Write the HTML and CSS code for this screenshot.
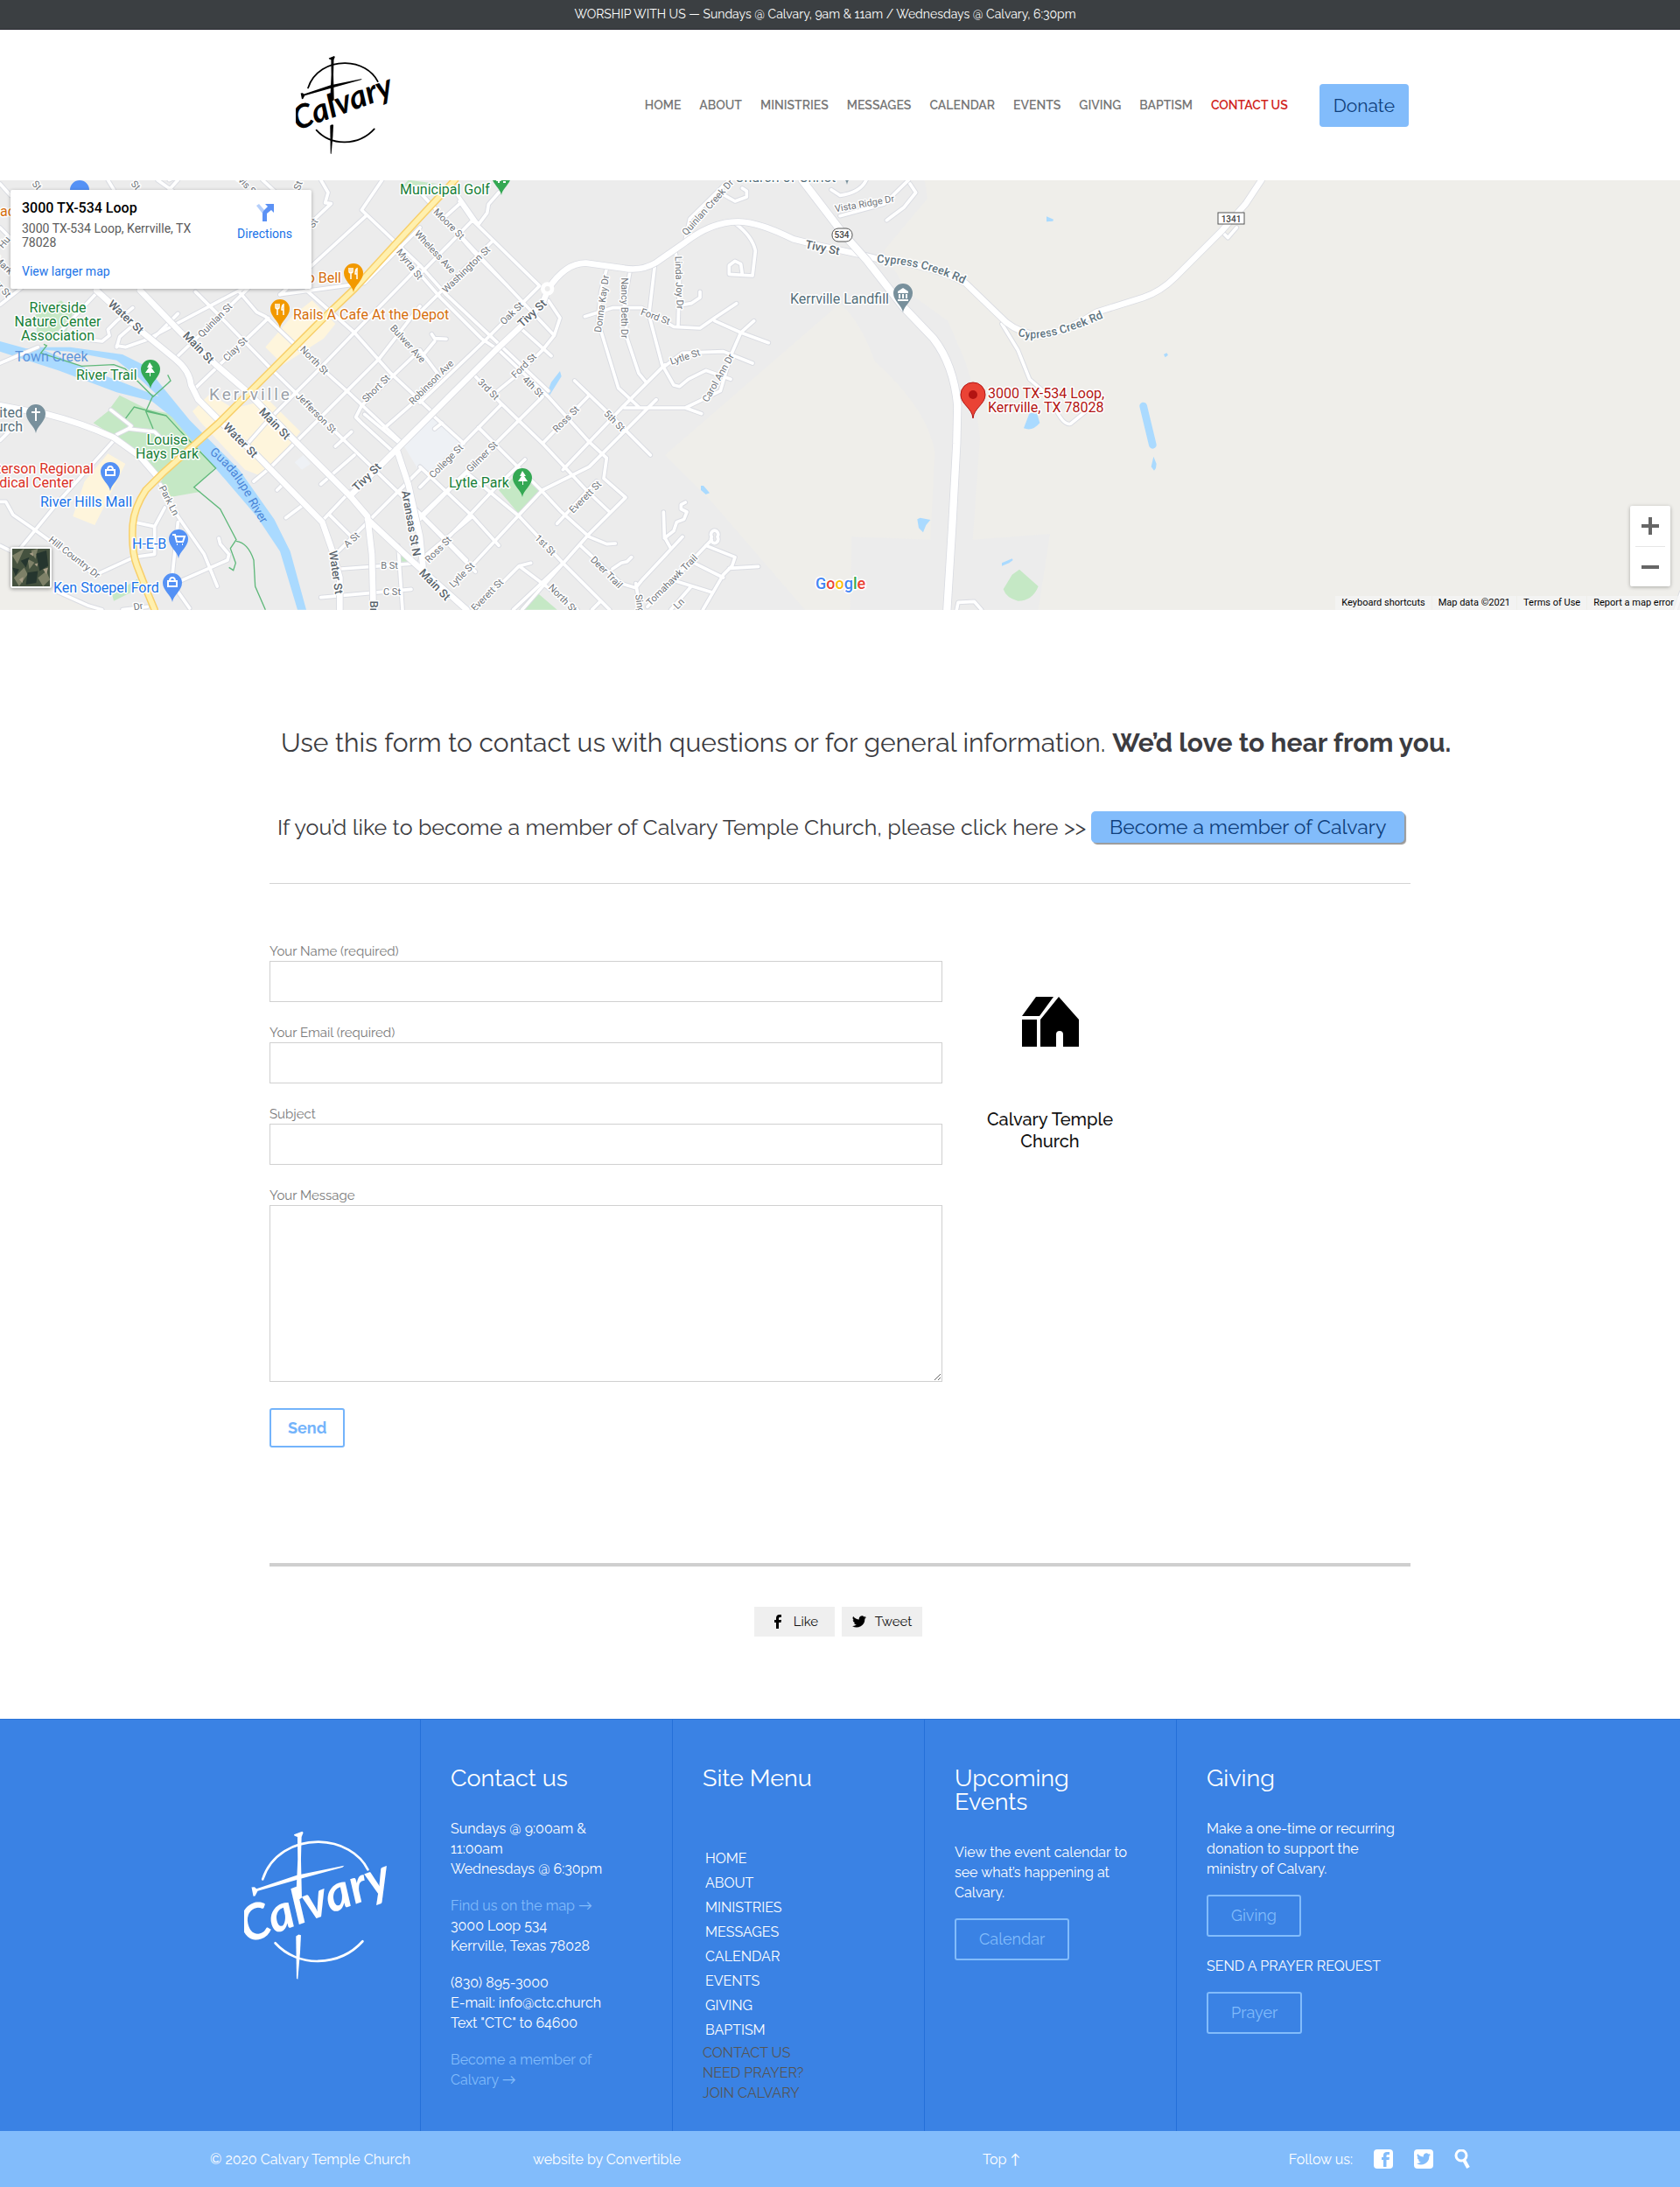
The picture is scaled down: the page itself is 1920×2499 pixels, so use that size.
FILE: index.html
```html
<!DOCTYPE html>
<html lang="en">
<head>
<meta charset="utf-8">
<meta name="viewport" content="width=device-width, initial-scale=1">
<title>Contact Us - Calvary Temple Church</title>
<link rel="stylesheet" href="styles.css">
</head>
<body>
<svg class="defs" aria-hidden="true">
  <symbol id="logo" viewBox="20 30 505 515">
    <g fill="currentColor">
      <path d="M190 46 218 35 222 39 216 54 214 130 217 262 202 272 197 262 203 130 202 54 192 50Z"/>
      <path d="M45 226 55 225 62 231 200 185 362 152 356 158 210 198 66 239 57 256 51 257Z"/>
      <path d="M197 394 206 388 214 390 211 450 203 541 199 538Z"/>
    </g>
    <g fill="none" stroke="currentColor" stroke-linecap="round" stroke-width="8">
      <path d="M83 199C110 115 190 70 275 71 350 72 415 110 443 166"/>
      <path d="M126 417C165 460 220 480 273 479 340 477 390 450 425 411"/>
    </g>
    <text class="logo-word" x="26" y="420" transform="rotate(-20 26 420)">Calvary</text>
  </symbol>
  <symbol id="pin" viewBox="-12 -12 24 36">
    <path d="M0 22C-1 14-11 9-11 0A11 11 0 0 1 11 0C11 9 1 14 0 22Z"/>
  </symbol>
  <symbol id="fb" viewBox="-4 0 16 16"><path d="M2 16V9H0V6h2V4C2 1.500 3.500 0 5.500 0H8v3H6.500C5.500 3 5 3.500 5 4.500V6h3L7.500 9H5v7Z"/></symbol>
  <symbol id="bird" viewBox="0 0 24 20"><path d="M24 2.400a10 10 0 0 1-2.800.8A5 5 0 0 0 23.300.5a10 10 0 0 1-3.100 1.200 4.900 4.900 0 0 0-8.400 4.500A14 14 0 0 1 1.700 1a4.900 4.900 0 0 0 1.500 6.600 4.900 4.900 0 0 1-2.200-.6 4.900 4.900 0 0 0 3.900 4.900 5 5 0 0 1-2.200.1 4.900 4.900 0 0 0 4.600 3.400A9.900 9.900 0 0 1 0 17.400 14 14 0 0 0 21.500 5a10 10 0 0 0 2.500-2.600Z"/></symbol>
</svg>

<p class="announce">WORSHIP WITH US — Sundays @ Calvary, 9am &amp; 11am / Wednesdays @ Calvary, 6:30pm</p>

<header class="header">
  <a class="brand" href="#" aria-label="Calvary home"><svg class="brand-mark"><use href="#logo"/></svg></a>
  <nav class="nav">
    <a href="#">HOME</a><a href="#">ABOUT</a><a href="#">MINISTRIES</a><a href="#">MESSAGES</a><a href="#">CALENDAR</a><a href="#">EVENTS</a><a href="#">GIVING</a><a href="#">BAPTISM</a><a class="current" href="#">CONTACT US</a>
  </nav>
  <a class="donate" href="#">Donate</a>
</header>

<section class="map" aria-label="Map">
  <svg class="map-canvas" viewBox="0 0 1920 491" preserveAspectRatio="xMidYMid slice">
    <defs>
      <g id="minor">
        <path d="M0 645 130 590 M0 445 95 370 M0 180 120 300 M0 30 36 70 M340 395 190 555 M400 590 410 555 450 520 M455 455 400 500 370 530 375 550 350 570 310 565 280 550 M400 585 430 590 530 555 610 475"/>
        <path d="M850 380 520 555 M870 370 600 630 M920 490 670 730 M670 400 740 470 925 660 1160 890 1440 1160 1600 1320 M820 400 880 470 910 485 1010 580 1200 750 1380 920 M1050 395 1215 540 1340 680 1480 810"/>
        <path d="M1440 310 1215 540 1080 680 920 840 850 920 M1440 600 1240 790 1220 830 1240 850 1350 950 M1185 745 1010 920 M1300 630 1185 745 930 1000 M1440 450 1300 630 M1440 180 1250 370 960 410 M1310 17 1240 120 1440 310 1530 410 1690 560 1880 740"/>
        <path d="M960 410 1255 140 M1440 760 1315 870 M1250 820 1370 920 M580 17 640 -10 M610 17 580 50 M370 17 390 50 M900 17 990 100 M1100 17 1125 60 1115 95 1135 98 1080 150 M540 17 600 60 M950 1080 975 1055 M980 1175 1040 1130 M1100 1190 1200 1085 M1130 1165 1210 1245 M1160 1290 1270 1180 1440 1010 M1170 1350 1440 1330 M1100 1448 1410 1420 M1365 1270 1380 1490 M1205 880 1150 930 M1215 960 1100 1060 M870 1050 930 1000"/>
        <path d="M0 1270 60 1300 M0 1120 20 1120 45 1165 110 1210 200 1275 330 1375 M330 1370 460 1310 530 1300 530 1205 565 1140 M460 1190 530 1205 M45 1310 200 1120 390 910 M590 1380 610 1190 M600 1400 780 1320 785 1300 755 1265 750 1245 M550 1060 610 1170 700 1300 745 1410 M590 1400 650 1485 M200 1430 300 1475 350 1490 M505 1480 420 1490 M380 805 450 860 440 870 400 890 M440 870 530 880 570 920 M0 910 30 880"/>
        <path d="M1480 100 1620 260 1740 380 1900 550 M1575 90 1620 155 1850 380 M1530 140 1580 95 M1620 155 1440 340 M1690 225 1440 470 M1570 70 1640 170 1670 130 1675 100 1710 60 M1850 380 1660 570 1440 780 M1900 550 1920 490 1880 430 M1740 380 1440 60 M1440 340 1510 420 1650 560 1710 600 1880 760 2020 915 2080 970 2070 1040 2145 1105 2020 1230 1790 1490 M1900 550 1860 600 1780 680 1700 745"/>
        <path d="M1790 530 1890 620 M1620 680 1720 785 1860 920 2010 1080 2090 1155 M1440 630 1490 570 M1440 600 1500 680 M1480 545 1490 560 1530 562 M1480 820 1590 920 M1490 870 1515 850 M1720 785 1440 1070 M1860 760 1700 920 1440 1170 M2020 755 1860 920 M1970 705 2100 830 2230 960 M2250 770 2020 1000 1860 1080 1780 1165 1580 1380 M2280 650 2130 800 1930 1010 M1640 865 1780 1005 1860 1085 1920 1150 2020 1240 2080 1265 2110 1263"/>
        <path d="M1600 1020 1440 1180 M1440 1000 1620 1170 1710 1270 M1600 1020 1780 1170 1930 1330 2090 1490 M1800 975 1700 1070 1540 1240 M1440 1165 1630 1360 M1440 1320 1620 1170 M1930 1330 1760 1490 M2045 1050 1910 1195 M1990 1270 2130 1400 2180 1415 2200 1390 2340 1240 M2180 1400 2195 1490 M2100 1350 2130 1330 2150 1325 2165 1310 M1630 1490 1780 1340 1820 1330 M1780 1340 1980 1490 M2060 1460 2030 1490"/>
        <path d="M2275 1155 2278 1240 2300 1280 M2278 1245 2310 1220 2320 1190 2345 1180 2355 1155 2335 1145 2335 1130 2350 1122 M2440 1240A12 14 0 1 0 2460 1240A12 14 0 1 0 2440 1240 M2440 1250 2220 1480 M2420 1270 2520 1310 2510 1340 2480 1370 2410 1490 M2380 1330 2480 1380 M2500 1348 2600 1342 M2310 1390 2440 1430 M2370 1410 2300 1490"/>
        <path d="M2080 320 2060 400 2050 500 2120 730 2190 795 M2160 330 2140 440 2150 560 2190 680 2215 710 M2245 310 2225 480 2270 650 2310 720 2330 725 2360 700 2420 670 2505 700 M2005 485 2100 455 2200 455 2310 520 2400 525 2450 490 2525 440 M2315 260 2330 340 2325 515 M2340 445 2370 440 2400 420 2400 400 M2450 500 2540 540 2635 575 M2585 500 2540 540 2505 620 2470 740 2350 798 2140 798 M2280 655 2340 610 2480 605 2580 645 M2350 798 2405 818 M2350 220 2365 150 2500 17 M2485 70 2520 90 2560 75 2560 55 2545 45 M2520 165Q2580 210 2590 260L2580 345 2500 340 2500 310 2520 295 2540 305 2545 340"/>
        <path d="M2880 70Q2950 60 2970 17 M3115 17 3030 100 2880 140 M3120 30 3140 60 3100 110 3040 155 M2850 50 2880 70 M3435 510 3490 600 3530 700 3600 760Q3640 860 3670 853L3760 780 M4190 195 4210 215 4240 180 M3280 1490 3285 1465 3340 1462 3365 1490 M5765 1430 5745 1490"/>
      </g>
      <g id="major">
        <path d="M330 395 490 540 600 630Q650 670 655 720L680 770 760 850 880 960 1105 1190 1140 1290 1165 1380 1165 1490"/>
        <path d="M480 395 620 540 740 650 850 745 1000 900 1200 1100 1260 1170 1275 1300 1280 1490 M1260 1180 1420 1330 1600 1490"/>
        <path d="M1360 940 1400 1060 1440 1240 1450 1340 M0 790 160 820Q280 850 390 900L480 965 545 1040"/>
        <path d="M1200 1100 1360 940 1490 810 1700 600 1790 515 1860 440 1880 390Q1940 300 2010 302L2140 320Q2200 330 2250 300L2350 230Q2440 160 2530 160 2600 160 2720 220L2800 240 2960 275"/>
        <path d="M2960 275 3020 290Q3200 310 3310 370L3450 505Q3500 545 3570 550 3650 540 3760 470L3920 420Q3980 400 4030 350L4190 190 4270 100 4325 17"/>
      </g>
      <path id="loop" d="M2750 17 2890 200 2970 290 3095 450 3200 560Q3270 650 3283 790L3280 920 3265 1200 3247 1490"/>
      <path id="hwy" d="M530 1490 505 1430 470 1340Q450 1290 455 1200 460 1140 500 1080L560 1020 750 850 940 660 1100 500 1215 390 1440 145 1560 17"/>
    </defs>
    <rect class="urban" width="1920" height="491"/>
    <g transform="translate(0 -6) scale(.33333)">
      <path class="rural" d="M3170 17 3180 80 3030 260 3110 400 3250 500 3310 640 3340 740 3360 900 3335 1250 3600 1230 3560 1490H5760V17ZM2880 440 2280 960 2440 1120 2760 1490H2915L2920 1240 3190 1250 3205 950Q3180 800 3000 640 2950 500 2880 440ZM0 1270 150 1390 340 1490H0Z"/>
      <path class="park" d="M120 480 210 430 250 470 220 560 130 570ZM410 755 500 800 590 820 660 890 740 1000 665 1075 690 1085 580 1105 540 1030 430 920 320 850 370 810ZM1710 1080 1780 1020 1850 1085 1778 1160ZM1840 1430 1910 1490H1780ZM1380 1290 1410 1325 1370 1325ZM385 1440 470 1385 490 1410 390 1460ZM1400 17 1500 30 1380 40ZM3495 1352 3560 1410Q3540 1460 3490 1460 3450 1450 3440 1420L3470 1370Z"/>
      <path class="shops" d="M1000 485 1070 430 1150 510 1110 560 970 650 910 590ZM720 750 800 800 920 770 1030 880 940 990 890 1030 840 1010 690 850 660 810ZM370 955 430 990 360 1130 325 1200 250 1170 290 1050Z"/>
      <path class="school" d="M1380 920 1490 825 1580 915 1480 1010 1440 1020ZM1040 960 1065 990 1035 1010 1010 985Z"/>
      <g class="water">
        <path d="M0 570 90 595 140 590 240 590 420 615 500 655 560 730 650 840 700 890 820 1010 940 1180 995 1290 1050 1490H1020L960 1290 880 1170 700 960 590 830 520 775 400 745 200 670 0 605Z"/>
        <path d="M1920 672 1925 690 1880 762 1872 755 1890 710ZM2403 1065 2412 1065 2433 1090 2420 1095 2403 1080ZM3530 815 3555 815 3565 850Q3540 880 3510 868ZM3145 1180 3155 1175 3190 1182 3175 1200 3165 1225 3150 1210ZM3435 1330 3470 1315 3473 1320 3460 1330 3435 1340ZM3588 142 3612 152 3610 158 3588 160ZM3990 615 4000 610 4005 617 3995 625ZM3955 965 3965 990 3963 1005 3957 1013 3947 1000Z"/>
        <path class="creek" d="M3920 792 3952 925"/>
      </g>
      <path class="river-gap" d="M150 600 240 605 400 635 470 690 545 760 520 750 430 715 300 665Z"/>
      <path class="trail" d="M150 580 160 585 140 610 280 655 390 650 430 665 480 715 525 760 575 715 585 705 575 685 M525 755 500 810 570 825 620 880 740 1005 665 1070 755 1145 810 1250 790 1280 808 1330 800 1355 785 1345 M810 1255Q850 1260 870 1320L875 1410 910 1490 M430 835 460 795 570 825 M500 810 525 870"/>
      <use class="road minor-edge" href="#minor"/><use class="road minor" href="#minor"/>
      <use class="road major-edge" href="#major"/><use class="road major" href="#major"/>
      <use class="road loop-edge" href="#loop"/><use class="road loop" href="#loop"/>
      <use class="road hwy-edge" href="#hwy"/><use class="road hwy" href="#hwy"/>
      <circle cx="1877" cy="390" r="16" fill="#ececec" stroke="#fff" stroke-width="14"/>
    </g>
    <g class="street">
      <text transform="translate(246 160) rotate(-45)">Quinlan St</text>
      <text transform="translate(269 193) rotate(-45)">Clay St</text>
      <text transform="translate(359 206) rotate(45)">North St</text>
      <text transform="translate(361 266) rotate(45)">Jefferson St</text>
      <text transform="translate(430 238) rotate(-45)">Short St</text>
      <text transform="translate(193 366) rotate(63)">Park Ln</text>
      <text transform="translate(85 431) rotate(38)">Hill Country Dr</text>
      <text transform="translate(402 411) rotate(-42)">A St</text>
      <text x="445" y="440">B St</text>
      <text x="448" y="470">C St</text>
      <text transform="translate(466 187) rotate(48)">Bulwer Ave</text>
      <text transform="translate(468 96) rotate(52)">Myrta St</text>
      <text transform="translate(158 487) rotate(-10)">Dr</text>
      <text transform="translate(42 6) rotate(50)">St</text>
      <text transform="translate(155 6) rotate(50)">St</text>
      <text transform="translate(278 2) rotate(45)">Travis St</text>
      <text transform="translate(341 6) rotate(-70)">St</text>
      <text transform="translate(358 49) rotate(-55)">St</text>
      <text transform="translate(5 71) rotate(-50)">Hu</text>
      <text transform="translate(4 97) rotate(45)">Mark</text>
      <text transform="translate(3 124) rotate(50)">er St</text>
      <text transform="translate(513 50) rotate(45)">Moore St</text>
      <text transform="translate(497 82) rotate(47)">Wheless Ave</text>
      <text transform="translate(533 102) rotate(-44)">Washington St</text>
      <text transform="translate(585 152) rotate(-44)">Oak St</text>
      <text transform="translate(688 141) rotate(-82)">Donna Kay Dr</text>
      <text transform="translate(713 146) rotate(90)">Nancy Beth Dr</text>
      <text transform="translate(776 117) rotate(88)">Linda Joy Dr</text>
      <text transform="translate(809 31) rotate(-48)">Quinlan Creek Dr</text>
      <text transform="translate(749 156) rotate(20)">Ford St</text>
      <text transform="translate(783 202) rotate(-18)">Lytle St</text>
      <text transform="translate(821 226) rotate(-60)">Carol Ann Dr</text>
      <text transform="translate(599 212) rotate(-45)">Ford St</text>
      <text transform="translate(609 236) rotate(45)">4th St</text>
      <text transform="translate(558 239) rotate(45)">3rd St</text>
      <text transform="translate(493 231) rotate(-45)">Robinson Ave</text>
      <text transform="translate(647 273) rotate(-45)">Ross St</text>
      <text transform="translate(702 275) rotate(45)">5th St</text>
      <text transform="translate(510 321) rotate(-45)">College St</text>
      <text transform="translate(551 316) rotate(-45)">Gilmer St</text>
      <text transform="translate(669 362) rotate(-45)">Everett St</text>
      <text transform="translate(623 417) rotate(45)">1st St</text>
      <text transform="translate(501 422) rotate(-45)">Ross St</text>
      <text transform="translate(528 451) rotate(-45)">Lytle St</text>
      <text transform="translate(557 474) rotate(-45)">Everett St</text>
      <text transform="translate(693 448) rotate(45)">Deer Trail</text>
      <text transform="translate(643 478) rotate(45)">North St</text>
      <text transform="translate(768 457) rotate(-45)">Tomahawk Trail</text>
      <text transform="translate(731 484) rotate(82)">Sing</text>
      <text transform="translate(776 484) rotate(-45)">Ln</text>
      <text transform="translate(988 27) rotate(-10)">Vista Ridge Dr</text>
    </g>
    <g class="street avenue">
      <text transform="translate(144 156) rotate(43)">Water St</text>
      <text transform="translate(227 191) rotate(46)">Main St</text>
      <text transform="translate(314 278) rotate(46)">Main St</text>
      <text transform="translate(275 297) rotate(46)">Water St</text>
      <text transform="translate(419 339) rotate(-44)">Tivy St</text>
      <text transform="translate(384 448) rotate(82)">Water St</text>
      <text transform="translate(470 392) rotate(80)">Aransas St N</text>
      <text transform="translate(427 487) rotate(90)">Br</text>
      <text transform="translate(608 152) rotate(-43)">Tivy St</text>
      <text transform="translate(497 462) rotate(46)">Main St</text>
      <text transform="translate(940 77) rotate(12)">Tivy St</text>
    </g>
    <path id="cc1" fill="none" d="M1002 94Q1060 96 1110 123"/>
    <path id="cc2" fill="none" d="M1163 177Q1190 190 1268 154"/>
    <path id="gr" fill="none" d="M239 312Q264 330 281 362T312 412"/>
    <g class="along">
      <text><textPath href="#cc1">Cypress Creek Rd</textPath></text>
      <text><textPath href="#cc2">Cypress Creek Rd</textPath></text>
    </g>
    <text class="river"><textPath href="#gr">Guadalupe River</textPath></text>
    <g class="shield">
      <rect x="951" y="55" width="23" height="15" rx="7"/><text x="962" y="66">534</text>
      <rect x="1392" y="37" width="30" height="13"/><text x="1407" y="48">1341</text>
    </g>
    <text class="town" x="239" y="251">Kerrville</text>
    <g class="pins">
      <use href="#pin" class="blue" x="79" y="-1" width="24" height="36"/>
      <use href="#pin" class="orange" x="392" y="94" width="24" height="36"/>
      <use href="#pin" class="orange" x="308" y="135" width="24" height="36"/>
      <use href="#pin" class="green" x="160" y="204" width="24" height="36"/>
      <use href="#pin" class="slate" x="29" y="255" width="24" height="36"/>
      <use href="#pin" class="blue" x="114" y="321" width="24" height="36"/>
      <use href="#pin" class="blue" x="192" y="398" width="24" height="36"/>
      <use href="#pin" class="blue" x="185" y="448" width="24" height="36"/>
      <use href="#pin" class="green" x="585" y="328" width="24" height="36"/>
      <use href="#pin" class="green" x="561" y="-17" width="24" height="36"/>
      <use href="#pin" class="slate" x="1020" y="117" width="24" height="36"/>
      <use href="#pin" class="slate" x="956" y="-29" width="24" height="36"/>
      <path class="red" d="M1112 272C1111 260 1098 256 1098 245A14 14 0 0 1 1126 245C1126 256 1113 260 1112 272Z"/>
    </g>
    <circle cx="1112" cy="245" r="5" fill="#b31412"/>
    <g fill="#fff">
      <path id="tree" d="M171 208 175 214H173L177 220H172V224H171V220H166L170 214H168Z"/>
      <use href="#tree" x="426" y="124"/>
      <path d="M568-2h3l2 3h-2v2h-2v-2h-2zM575 1h3v2h-3z"/>
      <path d="M40 260h2v4h4v2h-4v9h-2v-9h-4v-2h4z"/>
      <path d="M1026 127 1032 123 1038 127V129H1026ZM1027 130h2v5h-2zM1031 130h2v5h-2zM1035 130h2v5h-2zM1026 136h12v2h-12z"/>
    </g>
    <g fill="none" stroke="#fff" stroke-width="2">
      <path id="fork" d="M315 141v4q0 2 2 2t2-2v-4M317 141v13M324 154v-12q-2 1-2 6h2" stroke-width="1.500"/>
      <use href="#fork" x="84" y="-41"/>
      <path id="bag" d="M121 331h10v6h-10zM123 331q0-4 3-4t3 4"/>
      <use href="#bag" x="71" y="127"/>
      <path d="M197 405h3l2 8h7l2-6h-10M202 416h1M208 416h1"/>
    </g>
    <g class="poi">
      <g class="t-green">
        <text x="457" y="16">Municipal Golf</text>
        <text class="mid" x="66" y="151">Riverside</text><text class="mid" x="66" y="167">Nature Center</text><text class="mid" x="66" y="183">Association</text>
        <text x="87" y="228">River Trail</text>
        <text class="mid" x="191" y="302">Louise</text><text class="mid" x="191" y="318">Hays Park</text>
        <text x="513" y="351">Lytle Park</text>
      </g>
      <g class="t-blue">
        <text x="46" y="373">River Hills Mall</text><text x="151" y="421">H-E-B</text><text x="61" y="471">Ken Stoepel Ford</text>
      </g>
      <g class="t-orange">
        <text class="end" x="390" y="117">Taco Bell</text><text x="335" y="159">Rails A Cafe At the Depot</text><text x="0" y="41">aco</text>
      </g>
      <g class="t-slate">
        <text class="end" x="26" y="271">United</text><text class="end" x="26" y="287">Church</text>
        <text x="903" y="141">Kerrville Landfill</text><text x="840" y="2">Church of Christ</text>
      </g>
      <g class="t-red"><text class="end" x="107" y="335">Peterson Regional</text><text class="end" x="84" y="351">Medical Center</text></g>
      <g class="t-dest"><text x="1129" y="249">3000 TX-534 Loop,</text><text x="1129" y="265">Kerrville, TX 78028</text></g>
      <text class="t-creek" x="17" y="207">Town Creek</text>
    </g>
    <text class="google" x="932" y="467"><tspan fill="#4285f4">G</tspan><tspan fill="#ea4335">o</tspan><tspan fill="#fbbc05">o</tspan><tspan fill="#4285f4">g</tspan><tspan fill="#34a853">l</tspan><tspan fill="#ea4335">e</tspan></text>
  </svg>
  <div class="place">
    <div class="place-text">
      <strong>3000 TX-534 Loop</strong>
      <span>3000 TX-534 Loop, Kerrville, TX 78028</span>
      <a href="#">View larger map</a>
    </div>
    <a class="directions" href="#"><svg width="22" height="22" viewBox="0 0 22 22"><path fill="#b5cffb" d="M1 3 4 1 11 9 8 12Z"/><path fill="#5b91f5" d="M8 21V12Q8 10 10 8L14 4 11 1H21V11L18 8 13 12V21Z"/></svg>Directions</a>
  </div>
  <button class="satellite" type="button" aria-label="Show satellite imagery">
    <svg viewBox="0 0 44 44"><rect width="44" height="44" fill="#45523f"/><path fill="#7e8168" d="M0 8 14 0 6 18ZM22 2 30 0 27 12ZM2 34 14 22 18 30 8 44ZM30 34 40 26 44 36 36 44ZM18 12 26 16 20 24Z"/><path fill="#25352e" d="M28 6 40 2 42 20 32 26ZM10 14 20 10 16 22ZM18 28 30 26 28 40 16 42ZM0 22 8 24 4 32Z"/><path fill="#a79d86" d="M20 6 24 4 25 9ZM36 24 42 22 40 30ZM8 36 13 33 12 40ZM26 18 30 17 29 21Z"/></svg>
  </button>
  <div class="zoom">
    <button type="button" aria-label="Zoom in"><svg width="20" height="20" viewBox="0 0 20 20"><path d="M8 0h4v8h8v4h-8v8H8v-8H0V8h8z"/></svg></button>
    <button type="button" aria-label="Zoom out"><svg width="20" height="20" viewBox="0 0 20 20"><path d="M0 8h20v4H0z"/></svg></button>
  </div>
  <div class="legal"><a href="#">Keyboard shortcuts</a><span>Map data ©2021</span><a href="#">Terms of Use</a><a href="#">Report a map error</a></div>
</section>

<main class="main">
  <h2 class="lead">Use this form to contact us with questions or for general information. <strong>We’d love to hear from you.</strong></h2>
  <h3 class="member">If you’d like to become a member of Calvary Temple Church, please click here &gt;&gt; <a class="member-link" href="#">Become a member of Calvary</a></h3>
  <hr class="rule">
  <div class="columns">
    <form class="form">
      <label for="name">Your Name (required)</label>
      <input id="name" type="text">
      <label for="email">Your Email (required)</label>
      <input id="email" type="email">
      <label for="subject">Subject</label>
      <input id="subject" type="text">
      <label for="message">Your Message</label>
      <textarea id="message"></textarea>
      <button class="send" type="button">Send</button>
    </form>
    <aside class="church">
      <svg width="66" height="57" viewBox="0 0 66 57"><path d="M1 22 17 0H37L21 22ZM1 26H18V57H1ZM22 26 43 0 66 26V57H48V43Q48 39 44 39 40 39 40 43V57H22Z"/></svg>
      <p>Calvary Temple Church</p>
    </aside>
  </div>
  <hr class="rule thick">
  <div class="share">
    <button type="button"><svg width="16" height="16"><use href="#fb"/></svg>Like</button>
    <button type="button"><svg width="16" height="14"><use href="#bird"/></svg>Tweet</button>
  </div>
</main>

<footer>
  <div class="foot">
    <div class="foot-col foot-logo"><svg class="foot-mark"><use href="#logo"/></svg></div>
    <div class="foot-col">
      <h4>Contact us</h4>
      <p>Sundays @ 9:00am &amp; 11:00am<br>Wednesdays @ 6:30pm</p>
      <p><a class="pale" href="#">Find us on the map →</a><br>3000 Loop 534<br>Kerrville, Texas 78028</p>
      <p>(830) 895-3000<br>E-mail: info@ctc.church<br>Text "CTC" to 64600</p>
      <p><a class="pale" href="#">Become a member of Calvary →</a></p>
    </div>
    <div class="foot-col">
      <h4>Site Menu</h4>
      <ul class="menu">
        <li><a href="#">HOME</a></li><li><a href="#">ABOUT</a></li><li><a href="#">MINISTRIES</a></li><li><a href="#">MESSAGES</a></li><li><a href="#">CALENDAR</a></li><li><a href="#">EVENTS</a></li><li><a href="#">GIVING</a></li><li><a href="#">BAPTISM</a></li>
      </ul>
      <ul class="menu-dark">
        <li><a href="#">CONTACT US</a></li><li><a href="#">NEED PRAYER?</a></li><li><a href="#">JOIN CALVARY</a></li>
      </ul>
    </div>
    <div class="foot-col">
      <h4>Upcoming Events</h4>
      <p>View the event calendar to see what’s happening at Calvary.</p>
      <a class="outline" href="#">Calendar</a>
    </div>
    <div class="foot-col">
      <h4>Giving</h4>
      <p class="narrow">Make a one-time or recurring donation to support the ministry of Calvary.</p>
      <a class="outline" href="#">Giving</a>
      <p>SEND A PRAYER REQUEST</p>
      <a class="outline" href="#">Prayer</a>
    </div>
  </div>
  <div class="bar">
    <span>© 2020 Calvary Temple Church</span>
    <span>website by Convertible</span>
    <a href="#">Top ↑</a>
    <div class="follow">
      <span>Follow us:</span>
      <a href="#" aria-label="Facebook"><svg width="22" height="22" viewBox="0 0 22 22"><rect width="22" height="22" rx="4" fill="#fff"/><path fill="#82bcfb" d="M11 20V12H9V9h2V7c0-3 1.500-4 4-4h3v3h-2c-1 0-1.500.5-1.500 1.500V9H18l-.5 3h-3v8Z"/></svg></a>
      <a href="#" aria-label="Twitter"><svg width="22" height="22" viewBox="0 0 22 22"><rect width="22" height="22" rx="4" fill="#fff"/><use class="bird-cut" href="#bird" x="3" y="4" width="16" height="14"/></svg></a>
      <a href="#" aria-label="Search"><svg width="18" height="22" viewBox="0 0 18 22" fill="none" stroke="#fff"><circle cx="8" cy="7" r="6" stroke-width="3"/><path stroke-width="4" d="M11 12 16 21"/></svg></a>
    </div>
  </div>
</footer>
</body>
</html>
```
FILE: styles.css
```css
* { box-sizing: border-box; }
body {
  margin: 0;
  background: #fff;
  color: #3c3c41;
  font-family: Raleway, Lato, "Open Sans", sans-serif;
  font-size: 16px;
  line-height: 23px;
}
a { color: inherit; text-decoration: none; }
button { font-family: inherit; cursor: pointer; }
.defs { display: block; width: 0; height: 0; overflow: hidden; }
.logo-word { font: italic 700 168px Lato, sans-serif; fill: currentColor; }

.announce {
  margin: 0;
  padding: 0 34px 0 0;
  height: 34px;
  border-bottom: 1px solid #2a2a32;
  background: #3b3f42;
  color: #fff;
  font-size: 14px;
  line-height: 33px;
  text-align: center;
}
.header {
  display: flex;
  align-items: center;
  max-width: 1304px;
  height: 172px;
  margin: 0 auto;
  padding: 0 2px 0 30px;
}
.brand { color: #000; }
.brand-mark { display: block; width: 112px; height: 114px; }
.nav {
  display: flex;
  gap: 21px;
  margin-left: auto;
  color: #777;
  font-size: 14px;
  font-weight: 600;
}
.nav .current { color: #d0241c; }
.donate {
  margin-left: 36px;
  padding: 12px 16px;
  border-radius: 4px;
  background: #82bcfb;
  color: #0f3f7c;
  font-size: 21px;
  line-height: 25px;
}

.map { position: relative; height: 491px; overflow: hidden; font-family: Roboto, sans-serif; }
.map-canvas { display: block; width: 100%; height: 100%; }
.urban { fill: #ececec; }
.rural { fill: #efeeea; }
.park { fill: #c5e8c5; }
.shops { fill: #fef5dc; }
.school { fill: #eef1f5; }
.water { fill: #aadaff; }
.creek { stroke: #aadaff; stroke-width: 26; stroke-linecap: round; }
.river-gap { fill: #ececec; }
.trail { fill: none; stroke: #5fb87a; stroke-width: 4; }
.road { fill: none; stroke-linejoin: round; stroke-linecap: round; }
.minor-edge { stroke: #dadce2; stroke-width: 17; }
.minor { stroke: #fff; stroke-width: 11; }
.major-edge { stroke: #dadce2; stroke-width: 25; }
.major { stroke: #fff; stroke-width: 20; }
.loop-edge { stroke: #dadce2; stroke-width: 30; }
.loop { stroke: #fff; stroke-width: 25; }
.hwy-edge { stroke: #f8cf6a; stroke-width: 26; }
.hwy { stroke: #fff0ae; stroke-width: 17; }
.map text { paint-order: stroke; stroke: #fff; stroke-width: 3px; stroke-linejoin: round; }
.street { fill: #6f747a; font-size: 11px; text-anchor: middle; }
.street text { dominant-baseline: central; }
.avenue { fill: #5a646c; font-size: 13px; font-weight: 500; }
.along { fill: #607480; font-size: 13px; font-weight: 500; }
.map .river { fill: #4a86d8; stroke: none; font-size: 14px; }
.shield { fill: #fff; stroke: #555; font-size: 10px; font-weight: 500; text-anchor: middle; }
.map .shield text { fill: #444; stroke: none; }
.town { fill: #9a9fa8; font-size: 19px; letter-spacing: 3px; }
.poi { font-size: 16px; }
.mid { text-anchor: middle; }
.end { text-anchor: end; }
.green { fill: #34a853; }
.orange { fill: #f29900; }
.blue { fill: #5491f5; }
.slate { fill: #78909c; }
.red { fill: #ea4335; stroke: #b31412; }
.t-green { fill: #188038; }
.t-blue { fill: #1a73e8; }
.t-orange { fill: #d56e0c; }
.t-slate { fill: #546e7a; }
.t-red { fill: #d93025; }
.t-dest { fill: #b31412; }
.map .t-creek { fill: #5c94dc; stroke: none; }
.google { font-size: 18px; font-weight: 500; }

.place {
  position: absolute;
  top: 11px;
  left: 12px;
  display: flex;
  justify-content: space-between;
  width: 344px;
  height: 113px;
  padding: 12px 22px 0 13px;
  border-radius: 2px;
  background: #fff;
  box-shadow: 0 1px 4px rgba(0, 0, 0, .3);
  color: #5b5b5b;
  font-size: 14px;
  line-height: 16px;
}
.place-text { display: flex; flex-direction: column; width: 200px; }
.place-text strong { margin-bottom: 6px; color: #000; font-size: 16px; font-weight: 500; line-height: 18px; }
.place-text a { margin-top: 17px; }
.place a { color: #1a73e8; }
.directions { display: flex; flex-direction: column; align-items: center; gap: 5px; padding-top: 3px; }
.satellite {
  position: absolute;
  left: 12px;
  bottom: 25px;
  width: 47px;
  height: 47px;
  padding: 0;
  border: 2px solid #fff;
  border-radius: 2px;
  box-shadow: 0 1px 4px rgba(0, 0, 0, .4);
}
.satellite svg { display: block; width: 100%; height: 100%; }
.zoom {
  position: absolute;
  right: 11px;
  bottom: 27px;
  width: 46px;
  padding: 0 6px;
  border-radius: 2px;
  background: #fff;
  box-shadow: 0 1px 4px rgba(0, 0, 0, .3);
}
.zoom button { display: grid; place-items: center; width: 100%; height: 46px; padding: 0; border: 0; background: none; fill: #666; }
.zoom button + button { border-top: 1px solid #e6e6e6; }
.legal { position: absolute; right: 0; bottom: 0; display: flex; gap: 1px; color: #000; font-size: 11px; line-height: 16px; }
.legal > * { padding: 0 7px; background: rgba(245, 245, 245, .7); }

.main { max-width: 1304px; margin: 0 auto; }
.lead {
  margin: 0;
  padding: 132px 0 0 13px;
  font-size: 30px;
  font-weight: 400;
  line-height: 40px;
  white-space: nowrap;
}
.lead strong { font-weight: 700; }
.member {
  display: flex;
  align-items: center;
  gap: 6px;
  margin: 0;
  padding: 58px 7px 0 9px;
  font-size: 25px;
  font-weight: 400;
  line-height: 36px;
  white-space: nowrap;
}
.member-link {
  flex: 1;
  border-radius: 5px;
  background: #82bcfb;
  box-shadow: 2px 2px 1px #999;
  color: #0f3f7c;
  font-size: 23px;
  text-align: center;
}
.rule { height: 1px; margin: 46px 0 0; border: 0; background: #d4d4d4; }
.columns { display: flex; align-items: flex-start; gap: 50px; padding-top: 66px; }
.form { display: flex; flex-direction: column; align-items: flex-start; width: 769px; }
.form label { color: #7a7a7a; font-size: 15px; line-height: 22px; }
.form input, .form textarea { width: 100%; border: 1px solid #d0d0d0; background: #fff; font: inherit; }
.form input { height: 47px; margin-bottom: 24px; padding: 0 12px; }
.form textarea { height: 202px; margin-bottom: 30px; padding: 12px; resize: both; }
.send {
  height: 45px;
  padding: 0 19px;
  border: 2px solid #74b4fb;
  border-radius: 3px;
  background: #fff;
  color: #74b4fb;
  font-size: 18px;
  font-weight: 700;
}
.church { display: flex; flex-direction: column; align-items: center; width: 146px; padding-top: 63px; text-align: center; }
.church p { margin: 71px 0 0; color: #111; font-size: 20px; font-weight: 500; line-height: 25px; }
.thick { height: 4px; margin-top: 132px; background: #cfcfcf; }
.share { display: flex; justify-content: center; gap: 8px; padding: 46px 4px 94px 0; }
.share button {
  display: flex;
  align-items: center;
  justify-content: center;
  gap: 10px;
  width: 92px;
  height: 34px;
  padding: 0;
  border: 0;
  background: #efefef;
  color: #111;
  font-size: 15px;
}

.foot {
  display: grid;
  grid-template-columns: 25% 15% 15% 15% 30%;
  min-height: 471px;
  border-top: 1px solid #2b74d8;
  background: #3a82e4;
  color: #fff;
}
.foot-col { padding: 53px 48px 0 34px; border-left: 1px solid #2470d8; }
.foot-logo { padding: 126px 32px 0; border: 0; text-align: right; }
.foot-mark { width: 169px; height: 172px; }
.foot h4 { margin: 0 0 33px; font-size: 27px; font-weight: 400; line-height: 27px; }
.foot p { margin: 0 0 19px; }
.foot .narrow { width: 220px; }
.pale { color: #82bcfb; }
.menu, .menu-dark { margin: 0; padding: 0; list-style: none; }
.menu { padding: 32px 0 0 3px; line-height: 28px; }
.menu-dark { color: #555; }
.outline {
  display: table;
  margin: -1px 0 22px;
  padding: 10px 26px;
  border: 2px solid #82bcfb;
  border-radius: 3px;
  color: #82bcfb;
  font-size: 18px;
  line-height: 24px;
}
.bar {
  display: grid;
  grid-template-columns: 369px 514px 1fr auto;
  align-items: center;
  max-width: 1440px;
  height: 64px;
  margin: 0 auto;
}
footer { background: #82bcfb; color: #fff; }
.follow { display: flex; align-items: center; gap: 24px; }
.follow svg { display: block; }
.bird-cut { fill: #82bcfb; }
```
